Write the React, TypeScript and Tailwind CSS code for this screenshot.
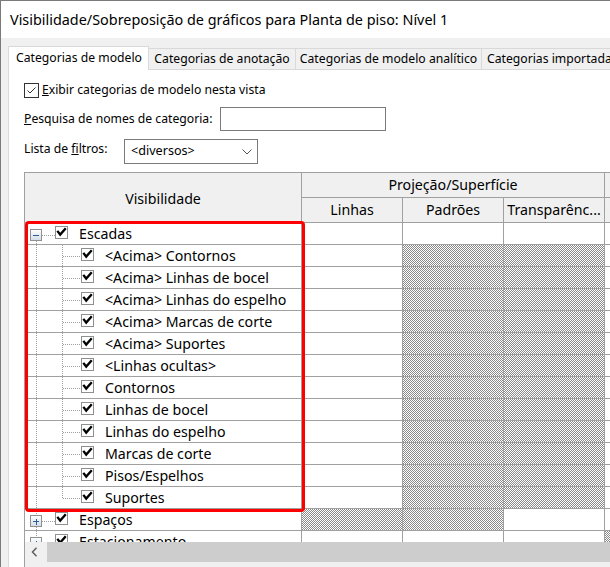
import React from "react";

type Row = {
  label: string;
  level: 0 | 1;
  expand?: "minus" | "plus";
  last?: boolean;
  first?: boolean;
  hatch: [boolean, boolean, boolean, boolean];
};

const sub: [boolean, boolean, boolean, boolean] = [false, true, true, false];

const rows: Row[] = [
  { label: "Escadas", level: 0, expand: "minus", first: true, hatch: [false, false, false, false] },
  { label: "<Acima> Contornos", level: 1, hatch: sub },
  { label: "<Acima> Linhas de bocel", level: 1, hatch: sub },
  { label: "<Acima> Linhas do espelho", level: 1, hatch: sub },
  { label: "<Acima> Marcas de corte", level: 1, hatch: sub },
  { label: "<Acima> Suportes", level: 1, hatch: sub },
  { label: "<Linhas ocultas>", level: 1, hatch: sub },
  { label: "Contornos", level: 1, hatch: sub },
  { label: "Linhas de bocel", level: 1, hatch: sub },
  { label: "Linhas do espelho", level: 1, hatch: sub },
  { label: "Marcas de corte", level: 1, hatch: sub },
  { label: "Pisos/Espelhos", level: 1, hatch: sub },
  { label: "Suportes", level: 1, last: true, hatch: sub },
  { label: "Espaços", level: 0, expand: "plus", hatch: [true, true, false, false] },
  { label: "Estacionamento", level: 0, expand: "plus", hatch: [false, false, false, true] },
];

const DOT = "#a0a0a0";

// Shared defs: 1px checker texture for disabled cells, gradient for the expand box
function SharedDefs() {
  return (
    <svg width="0" height="0" className="absolute">
      <defs>
        <pattern id="cellChecker" width="2" height="2" patternUnits="userSpaceOnUse">
          <rect width="2" height="2" fill="#ffffff" />
          <rect x="0" y="0" width="1" height="1" fill="#8a8a8a" />
          <rect x="1" y="1" width="1" height="1" fill="#8a8a8a" />
        </pattern>
        <linearGradient id="expandFill" x1="0" y1="0" x2="0" y2="1">
          <stop offset="0" stopColor="#ffffff" />
          <stop offset="1" stopColor="#d3dce8" />
        </linearGradient>
      </defs>
    </svg>
  );
}

function TreeCheck() {
  return (
    <svg width="13" height="13" viewBox="0 0 13 13" className="shrink-0 mt-[3px]">
      <rect x="0.5" y="0.5" width="12" height="12" fill="#fff" stroke="#8e8f8f" />
      <path d="M3 5.8 L5.2 8.6 L10 3.2" fill="none" stroke="#000" strokeWidth="2.3" strokeLinecap="square" />
    </svg>
  );
}

function Gutter({ row }: { row: Row }) {
  if (row.level === 0) {
    return (
      <svg width="30" height="21" viewBox="0 0 30 21" className="shrink-0" shapeRendering="crispEdges">
        {!row.first && <line x1="11.5" y1="0" x2="11.5" y2="6" stroke={DOT} strokeDasharray="1 1" />}
        <line x1="11.5" y1="18" x2="11.5" y2="21" stroke={DOT} strokeDasharray="1 1" />
        <line x1="17" y1="12.5" x2="30" y2="12.5" stroke={DOT} strokeDasharray="1 1" />
        <rect x="5.5" y="6.5" width="11" height="11" fill="url(#expandFill)" stroke="#919191" />
        <line x1="8" y1="12.5" x2="14" y2="12.5" stroke="#2d5d98" />
        {row.expand === "plus" && <line x1="11" y1="9.5" x2="11" y2="15.5" stroke="#2d5d98" />}
      </svg>
    );
  }
  return (
    <svg width="56" height="21" viewBox="0 0 56 21" className="shrink-0" shapeRendering="crispEdges">
      <line x1="11.5" y1="0" x2="11.5" y2="21" stroke={DOT} strokeDasharray="1 1" />
      <line x1="37.5" y1="0" x2="37.5" y2={row.last ? 12 : 21} stroke={DOT} strokeDasharray="1 1" />
      <line x1="38" y1="11.5" x2="56" y2="11.5" stroke={DOT} strokeDasharray="1 1" />
    </svg>
  );
}

function Cell({ on, wide }: { on: boolean; wide?: boolean }) {
  return (
    <div
      className={
        wide
          ? "w-[200px] h-full shrink-0 border-r border-[#a0a0a0] bg-white"
          : "w-[101px] h-full shrink-0 border-r border-[#a0a0a0] bg-white"
      }
    >
      {on && (
        <svg className="block w-full h-full">
          <rect width="100%" height="100%" fill="url(#cellChecker)" />
        </svg>
      )}
    </div>
  );
}

function DataRow({ row }: { row: Row }) {
  return (
    <div className="flex h-[22px] shrink-0 border-b border-[#a0a0a0]">
      <div className="w-[277px] h-full shrink-0 border-r border-[#a0a0a0] flex items-start bg-white">
        <Gutter row={row} />
        <TreeCheck />
        <span className="ml-[11px] text-[14.2px] leading-[21px] whitespace-nowrap">{row.label}</span>
      </div>
      <Cell on={row.hatch[0]} />
      <Cell on={row.hatch[1]} />
      <Cell on={row.hatch[2]} />
      <Cell on={row.hatch[3]} wide />
    </div>
  );
}

function Tabs() {
  return (
    <div className="relative z-10 flex items-end h-[23px] shrink-0 text-[12.2px] whitespace-nowrap">
      <div className="h-[24px] -mb-px w-[141px] shrink-0 bg-white border-l border-t border-r border-[#d9d9d9] flex items-center pl-[7px]">
        Categorias de modelo
      </div>
      <div className="h-[21px] w-[147px] shrink-0 bg-[#f0f0f0] border-t border-r border-[#d9d9d9] flex items-center justify-center">
        Categorias de anotação
      </div>
      <div className="h-[21px] w-[186px] shrink-0 bg-[#f0f0f0] border-t border-r border-[#d9d9d9] flex items-center justify-center">
        Categorias de modelo analítico
      </div>
      <div className="h-[21px] w-[160px] shrink-0 bg-[#f0f0f0] border-t border-r border-[#d9d9d9] flex items-center pl-[5px]">
        Categorias importadas
      </div>
    </div>
  );
}

export default function App() {
  return (
    <div className="relative w-[610px] h-[567px] overflow-hidden flex flex-col bg-[#f0f0f0] border-t border-l border-[#7a7a7a] font-['Noto_Sans',sans-serif] text-black">
      <SharedDefs />
      <div className="h-[37px] shrink-0 bg-white flex items-center pl-[9px] text-[14.4px] whitespace-nowrap">
        Visibilidade/Sobreposição de gráficos para Planta de piso: Nível 1
      </div>
      <div className="flex-1 min-h-0 flex flex-col pt-[8px] pl-[7px]">
        <Tabs />
        <div className="flex-1 min-h-0 overflow-hidden bg-white border-t border-l border-[#d9d9d9] pl-[15px] pt-[12px] flex flex-col text-[12.2px]">
          <div className="flex items-center h-[16px] shrink-0">
            <svg width="15" height="15" viewBox="0 0 15 15" className="shrink-0">
              <rect x="0.5" y="0.5" width="14" height="14" fill="#fff" stroke="#333" />
              <path d="M3.5 7.5 L6 10 L11.5 4.5" fill="none" stroke="#333" strokeWidth="1" />
            </svg>
            <span className="ml-[3px] whitespace-nowrap">
              <span className="underline">E</span>xibir categorias de modelo nesta vista
            </span>
          </div>

          <div className="flex items-center mt-[9px] h-[24px] shrink-0">
            <span className="w-[196px] shrink-0 whitespace-nowrap">
              <span className="underline">P</span>esquisa de nomes de categoria:
            </span>
            <div className="w-[166px] h-[24px] shrink-0 border border-[#7a7a7a] bg-white" />
          </div>

          <div className="flex items-center mt-[8px] h-[25px] shrink-0">
            <span className="w-[100px] shrink-0 whitespace-nowrap self-start mt-[1px]">
              Lista de <span className="underline">f</span>iltros:
            </span>
            <div className="w-[134px] h-[25px] shrink-0 border border-[#7a7a7a] bg-white flex items-center pl-[6px] pr-[5px]">
              <span className="flex-1 text-[12.6px]">&lt;diversos&gt;</span>
              <svg width="10" height="6" viewBox="0 0 10 6">
                <polyline points="0.5,0.5 5,5 9.5,0.5" fill="none" stroke="#555" />
              </svg>
            </div>
          </div>

          <div className="relative mt-[8px] w-[720px] shrink-0 border-l border-t border-[#a0a0a0] flex flex-col">
            <div className="flex h-[50px] shrink-0 bg-[#f0f0f0] text-[14.2px] whitespace-nowrap">
              <div className="w-[277px] h-full shrink-0 border-r border-b border-[#a0a0a0] flex items-center justify-center pt-[3px]">
                Visibilidade
              </div>
              <div className="w-[303px] h-full shrink-0 flex flex-col">
                <div className="h-[25px] border-r border-b border-[#a0a0a0] flex items-center justify-center">
                  Projeção/Superfície
                </div>
                <div className="h-[25px] flex">
                  <div className="w-[101px] h-full border-r border-b border-[#a0a0a0] flex items-center justify-center">
                    Linhas
                  </div>
                  <div className="w-[101px] h-full border-r border-b border-[#a0a0a0] flex items-center justify-center">
                    Padrões
                  </div>
                  <div className="w-[101px] h-full border-r border-b border-[#a0a0a0] flex items-center justify-center">
                    Transparênc...
                  </div>
                </div>
              </div>
              <div className="w-[200px] h-full shrink-0 flex flex-col">
                <div className="h-[25px] border-b border-[#a0a0a0]" />
                <div className="h-[25px] border-b border-[#a0a0a0]" />
              </div>
            </div>

            <div className="h-[319px] shrink-0 overflow-hidden flex flex-col">
              {rows.map((r, i) => (
                <DataRow key={i} row={r} />
              ))}
            </div>

            <div className="flex h-[20px] shrink-0">
              <div className="w-[22px] h-full shrink-0 bg-[#f0f0f0] flex items-center justify-center pr-[4px]">
                <svg width="7" height="10" viewBox="0 0 7 10">
                  <polyline points="5.5,0.8 1.5,5 5.5,9.2" fill="none" stroke="#606060" strokeWidth="1.5" />
                </svg>
              </div>
              <div className="flex-1 h-full bg-[#cdcdcd]" />
            </div>
            <div className="h-[10px] shrink-0 bg-[#f0f0f0]" />

            <div className="absolute left-0 top-[48px] w-[280px] h-[291px] border-[3px] border-[#ff0000] rounded-[4px] pointer-events-none" />
          </div>
        </div>
      </div>
    </div>
  );
}
